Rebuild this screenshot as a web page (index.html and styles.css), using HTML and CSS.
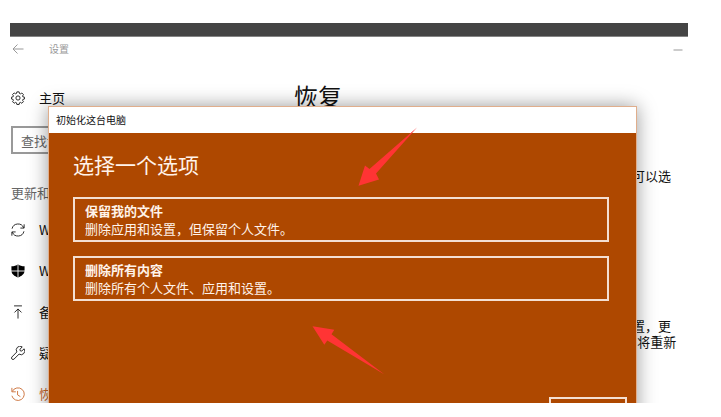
FILE: index.html
```html
<!DOCTYPE html>
<html lang="zh-CN">
<head>
  <meta charset="UTF-8" />
  <meta name="viewport" content="width=device-width, initial-scale=1.0"/>
  <title>设置</title>
  <link rel="stylesheet" href="styles.css">
</head>
<body>

  <div class="screen">
    <div class="top-strip"></div>

    <header class="titlebar">
      <button class="icon-btn" aria-label="返回">
        <svg width="12" height="12" viewBox="0 0 12 12"><path d="M11.5 6H1M5.5 1.5L1 6l4.5 4.5"/></svg>
      </button>
      <span class="titlebar-text">设置</span>
      <button class="icon-btn minimize" aria-label="最小化">
        <svg width="10" height="12" viewBox="0 0 10 12"><path d="M0.5 7h9"/></svg>
      </button>
    </header>

    <div class="layout">
      <nav class="sidebar">
        <a class="nav-item" href="#">
          <svg viewBox="0 0 16 16"><path d="M6.7 1h2.6l.4 1.9 1 .4 1.7-1 1.8 1.8-1 1.6.4 1 1.9.4v2l-1.9.5-.4 1 1 1.6-1.8 1.8-1.6-1-1.1.5-.4 1.9H6.7l-.4-1.9-1.1-.5-1.6 1-1.8-1.8 1-1.6-.4-1L.5 9.100v-2l1.900-.5.4-1-1-1.600 1.800-1.800 1.700 1 1-.4z"/><circle cx="8" cy="8" r="2.400"/></svg>
          <span>主页</span>
        </a>
        <input class="search" type="text" placeholder="查找设置" aria-label="查找设置">
        <h2 class="nav-group">更新和安全</h2>
        <a class="nav-item" href="#">
          <svg viewBox="0 0 16 16"><path d="M1.2 6.5A7 7 0 0 1 14.5 5.500M14.800 9.500A7 7 0 0 1 1.500 10.500M15 1.500v4.300h-4.300M1 14.500v-4.300h4.300"/></svg>
          <span>Windows 更新</span>
        </a>
        <a class="nav-item" href="#">
          <svg viewBox="0 0 16 16"><path class="solid" d="M8 0.500C6 2 3.500 2.500 0.500 2.500V7.500C0.500 11.500 4 14 8 15.500 12 14 15.500 11.500 15.500 7.500V2.500C12.500 2.500 10 2 8 0.500z"/><path class="cross" d="M8 1v14.500M0 8h16"/></svg>
          <span>Windows Defender</span>
        </a>
        <a class="nav-item" href="#">
          <svg viewBox="0 0 16 16"><path d="M3.500 1h9M8 15.500V4.500M4 8.500l4-4 4 4"/></svg>
          <span>备份</span>
        </a>
        <a class="nav-item" href="#">
          <svg viewBox="0 0 16 16"><path d="M12.800 1A4.300 4.300 0 0 0 6.700 6.800L1 12.600a1.700 1.700 0 0 0 2.400 2.400L9.200 9.300A4.300 4.300 0 0 0 15 3.200L12.300 5.700 10.500 5.500 10.300 3.700z"/></svg>
          <span>疑难解答</span>
        </a>
        <a class="nav-item active" href="#">
          <svg viewBox="0 0 16 16"><path d="M1.500 5A7.200 7.200 0 1 1 1 10M1 1v4.500h4.500M7.500 4.500v4.500l3.200 2"/></svg>
          <span>恢复</span>
        </a>
      </nav>

      <main class="content">
        <h1>恢复</h1>
        <p class="reset-text">如果你的电脑未正常运行，初始化电脑可能会解决问题。你可以选<br>择保留个人文件或删除个人文件，然后重新安装 Windows。</p>
        <p class="startup-text">从设备或光盘(如 U 盘或 DVD)启动，更改你的电脑的固件设置，更<br>改 Windows 启动设置，或者从系统映像还原 Windows。 这将重新<br>启动电脑。</p>
      </main>
    </div>

    <!-- Reset dialog -->
    <section class="dialog" role="dialog" aria-labelledby="dialogTitle">
      <div class="dialog-title" id="dialogTitle">初始化这台电脑</div>
      <div class="dialog-body">
        <h2>选择一个选项</h2>
        <div class="options">
          <button class="option">
            <strong>保留我的文件</strong>
            <span>删除应用和设置，但保留个人文件。</span>
          </button>
          <button class="option">
            <strong>删除所有内容</strong>
            <span>删除所有个人文件、应用和设置。</span>
          </button>
        </div>
        <div class="dialog-footer">
          <button class="cancel" aria-label="取消"></button>
        </div>
      </div>

      <svg class="arrow arrow-keep" width="60" height="60" viewBox="0 0 60 60"><path d="M0.500 58.800L7 38.500l4.500 3.500L59 0.500 18 46.500l3 6z"/></svg>
      <svg class="arrow arrow-remove" width="74" height="50" viewBox="0 0 74 50"><path d="M0.500 1.200L22.300 4.700l-2.800 4.500L72.500 49.500 15.300 15.500l-3 4.200z"/></svg>
    </section>
  </div>

</body>
</html>
```
FILE: styles.css
```css
* {
  box-sizing: border-box;
}

body {
  margin: 0;
  padding: 23px 33px 14px 10px;
  height: 100vh;
  background: #fff;
  color: #111;
  font-family: "Noto Sans CJK SC", sans-serif;
  font-size: 13px;
  line-height: 16px;
}

h1, h2, p {
  margin: 0;
  font-weight: normal;
}

button, input {
  font-family: inherit;
  font-size: inherit;
  color: inherit;
}

svg {
  fill: none;
  stroke: currentColor;
}

.screen {
  position: relative;
  height: 100%;
  overflow: hidden;
}

.top-strip {
  height: 14px;
  background: #444;
  border-bottom: 1px solid #848484;
}

/* Settings window */
.titlebar {
  display: flex;
  align-items: center;
  height: 24px;
  padding: 0 5px 0 2px;
  color: #999;
}

.icon-btn {
  display: flex;
  padding: 0;
  border: none;
  background: none;
  color: #999;
}

.titlebar-text {
  margin-left: 25px;
  font-size: 10px;
}

.minimize {
  margin-left: auto;
}

.layout {
  display: flex;
}

.sidebar {
  display: flex;
  flex-direction: column;
  flex: 0 0 284px;
  padding: 16px 24px 0 1px;
}

.nav-item {
  display: flex;
  align-items: center;
  gap: 14px;
  height: 41px;
  flex-shrink: 0;
  color: #111;
  text-decoration: none;
}

.nav-item svg {
  width: 14px;
  height: 14px;
}

.nav-item .solid {
  fill: #000;
  stroke: none;
}

.nav-item .cross {
  stroke: #fff;
}

.nav-item.active {
  color: #c8682e;
}

.search {
  height: 28px;
  margin: 8px 0 31px;
  padding: 0 8px;
  border: 2px solid #999;
  background: #fff;
}

.search::placeholder {
  color: #666;
  opacity: 1;
}

.nav-group {
  height: 24px;
  color: #666;
  font-size: 13px;
}

.content {
  flex: 1;
  padding-top: 19px;
  white-space: nowrap;
}

.content h1 {
  font-size: 24px;
  line-height: 32px;
}

.reset-text {
  margin-top: 56px;
}

.startup-text {
  margin-top: 118px;
}

/* Dialog over the window */
.dialog {
  position: absolute;
  top: 83px;
  left: 38px;
  right: 51px;
  border: 1px solid #e0ae8c;
  background: #ae4800;
  box-shadow: 0 0 18px rgba(0, 0, 0, 0.4);
  color: #fff3ea;
}

.dialog-title {
  padding: 5px 7px;
  background: #fff;
  color: #111;
  font-size: 10px;
}

.dialog-body {
  padding: 17px 27px 18px 24px;
}

.dialog-body h2 {
  margin-bottom: 19px;
  font-size: 21px;
  line-height: 28px;
}

.options {
  display: flex;
  flex-direction: column;
  gap: 14px;
}

.option {
  display: flex;
  flex-direction: column;
  padding: 3px 10px 2px;
  border: 2px solid #f4dfd2;
  background: none;
  line-height: 18px;
  text-align: left;
}

.dialog-footer {
  display: flex;
  justify-content: flex-end;
  margin: 96px -18px 0 0;
}

.cancel {
  width: 78px;
  height: 28px;
  border: 2px solid #f4dfd2;
  background: none;
}

/* Red pointers */
.arrow {
  position: absolute;
}

.arrow path {
  fill: #ff3434;
  stroke: none;
}

.arrow-keep {
  top: 20px;
  left: 309px;
}

.arrow-remove {
  top: 218px;
  left: 263px;
}
```
